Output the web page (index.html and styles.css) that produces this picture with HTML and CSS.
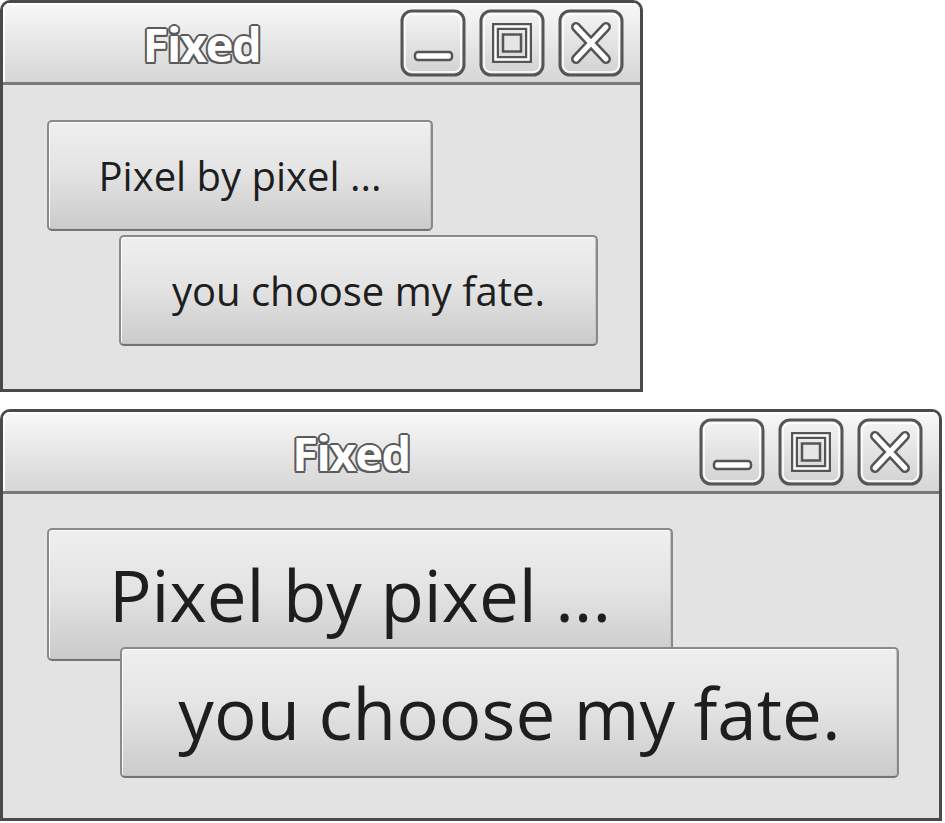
FILE: index.html
```html
<!DOCTYPE html>
<html>
<head>
<meta charset="utf-8">
<title>Fixed</title>
<link rel="stylesheet" href="styles.css">
</head>
<body>
<svg width="0" height="0" class="defs" aria-hidden="true">
  <defs>
    <linearGradient id="cg" x1="0" y1="0" x2="0" y2="1">
      <stop offset="0" stop-color="#f4f4f4"/>
      <stop offset="1" stop-color="#d2d2d2"/>
    </linearGradient>
    <g id="frame">
      <rect x="2" y="2" width="62" height="64" rx="10" fill="url(#cg)" stroke="#555" stroke-width="3"/>
      <rect x="5" y="5" width="56" height="58" rx="7" fill="none" stroke="#fff" stroke-width="1.5"/>
    </g>
    <g id="ico-min">
      <use href="#frame"/>
      <rect x="15" y="43" width="37" height="8" rx="3" fill="#fff" stroke="#555" stroke-width="2.5"/>
    </g>
    <g id="ico-max">
      <use href="#frame"/>
      <rect x="16.5" y="17.5" width="33" height="33" fill="none" stroke="#555" stroke-width="7"/>
      <rect x="16.5" y="17.5" width="33" height="33" fill="none" stroke="#fff" stroke-width="2.5"/>
      <rect x="24" y="25.5" width="18" height="17" fill="#e6e6e6" stroke="#555" stroke-width="2.5"/>
    </g>
    <g id="ico-close">
      <use href="#frame"/>
      <path d="M18 18 L48 50 M48 18 L18 50" stroke="#555" stroke-width="10" stroke-linecap="round"/>
      <path d="M18 18 L48 50 M48 18 L18 50" stroke="#fff" stroke-width="5" stroke-linecap="round"/>
    </g>
  </defs>
</svg>

<div class="desktop">
  <div class="window win-small">
    <div class="titlebar">
      <div class="title">Fixed</div>
      <div class="controls">
        <svg class="ctl" viewBox="0 0 66 68"><use href="#ico-min"/></svg>
        <svg class="ctl" viewBox="0 0 66 68"><use href="#ico-max"/></svg>
        <svg class="ctl" viewBox="0 0 66 68"><use href="#ico-close"/></svg>
      </div>
    </div>
    <div class="fixed">
      <button class="btn btn-a">Pixel by pixel ...</button>
      <button class="btn btn-b">you choose my fate.</button>
    </div>
  </div>

  <div class="window win-large">
    <div class="titlebar">
      <div class="title">Fixed</div>
      <div class="controls">
        <svg class="ctl" viewBox="0 0 66 68"><use href="#ico-min"/></svg>
        <svg class="ctl" viewBox="0 0 66 68"><use href="#ico-max"/></svg>
        <svg class="ctl" viewBox="0 0 66 68"><use href="#ico-close"/></svg>
      </div>
    </div>
    <div class="fixed">
      <button class="btn btn-a">Pixel by pixel ...</button>
      <button class="btn btn-b">you choose my fate.</button>
    </div>
  </div>
</div>
</body>
</html>
```

FILE: styles.css
```css
* { box-sizing: border-box; }

html, body {
  margin: 0;
  padding: 0;
  background: #ffffff;
}

.defs {
  position: absolute;
  width: 0;
  height: 0;
}

.desktop {
  display: flex;
  flex-direction: column;
  align-items: flex-start;
  gap: 17px;
}

.window {
  display: flex;
  flex-direction: column;
  border: 3px solid #4a4a4a;
  border-radius: 10px 10px 0 0;
  background: #e3e3e3;
  overflow: hidden;
}

.win-small {
  width: 643px;
  height: 392px;
}

.win-large {
  width: 942px;
  height: 412px;
}

.titlebar {
  flex: none;
  height: 82px;
  display: flex;
  align-items: center;
  padding-right: 16px;
  border-bottom: 3px solid #7a7a7a;
  background: linear-gradient(#f8f8f8, #d6d6d6);
  box-shadow: inset 2px 2px 0 #ffffff;
}

.title {
  flex: 1;
  text-align: center;
  font-family: "Open Sans", "DejaVu Sans", sans-serif;
  font-weight: 700;
  font-size: 47px;
  letter-spacing: -1.5px;
  color: #ffffff;
  text-shadow:
    2px 0 0 #5a5a5a, -2px 0 0 #5a5a5a, 0 2px 0 #5a5a5a, 0 -2px 0 #5a5a5a,
    1.5px 1.5px 0 #5a5a5a, -1.5px 1.5px 0 #5a5a5a, 1.5px -1.5px 0 #5a5a5a, -1.5px -1.5px 0 #5a5a5a;
  padding-top: 2px;
}

.controls {
  display: flex;
  gap: 13px;
}

.ctl {
  width: 66px;
  height: 68px;
  display: block;
}

.fixed {
  position: relative;
  flex: 1;
}

.btn {
  position: absolute;
  margin: 0;
  padding: 0;
  border: 2px solid #8a8a8a;
  border-bottom-color: #737373;
  border-radius: 5px;
  background: linear-gradient(#efefef, #e4e4e4 45%, #cbcbcb);
  box-shadow: inset 1px 1px 0 #fbfbfb, inset -1px -1px 0 #c4c4c4;
  font-family: "Open Sans", "DejaVu Sans", sans-serif;
  font-weight: 500;
  color: #1e1e1e;
  text-align: center;
  white-space: nowrap;
}

.win-small .btn { font-size: 40px; }
.win-large .btn { font-size: 71px; }

.win-small .btn-a { left: 44px; top: 35px; width: 386px; height: 111px; }
.win-small .btn-b { left: 116px; top: 150px; width: 479px; height: 111px; }

.win-large .btn-a { left: 44px; top: 34px; width: 626px; height: 133px; }
.win-large .btn-b { left: 117px; top: 153px; width: 779px; height: 131px; }
```
